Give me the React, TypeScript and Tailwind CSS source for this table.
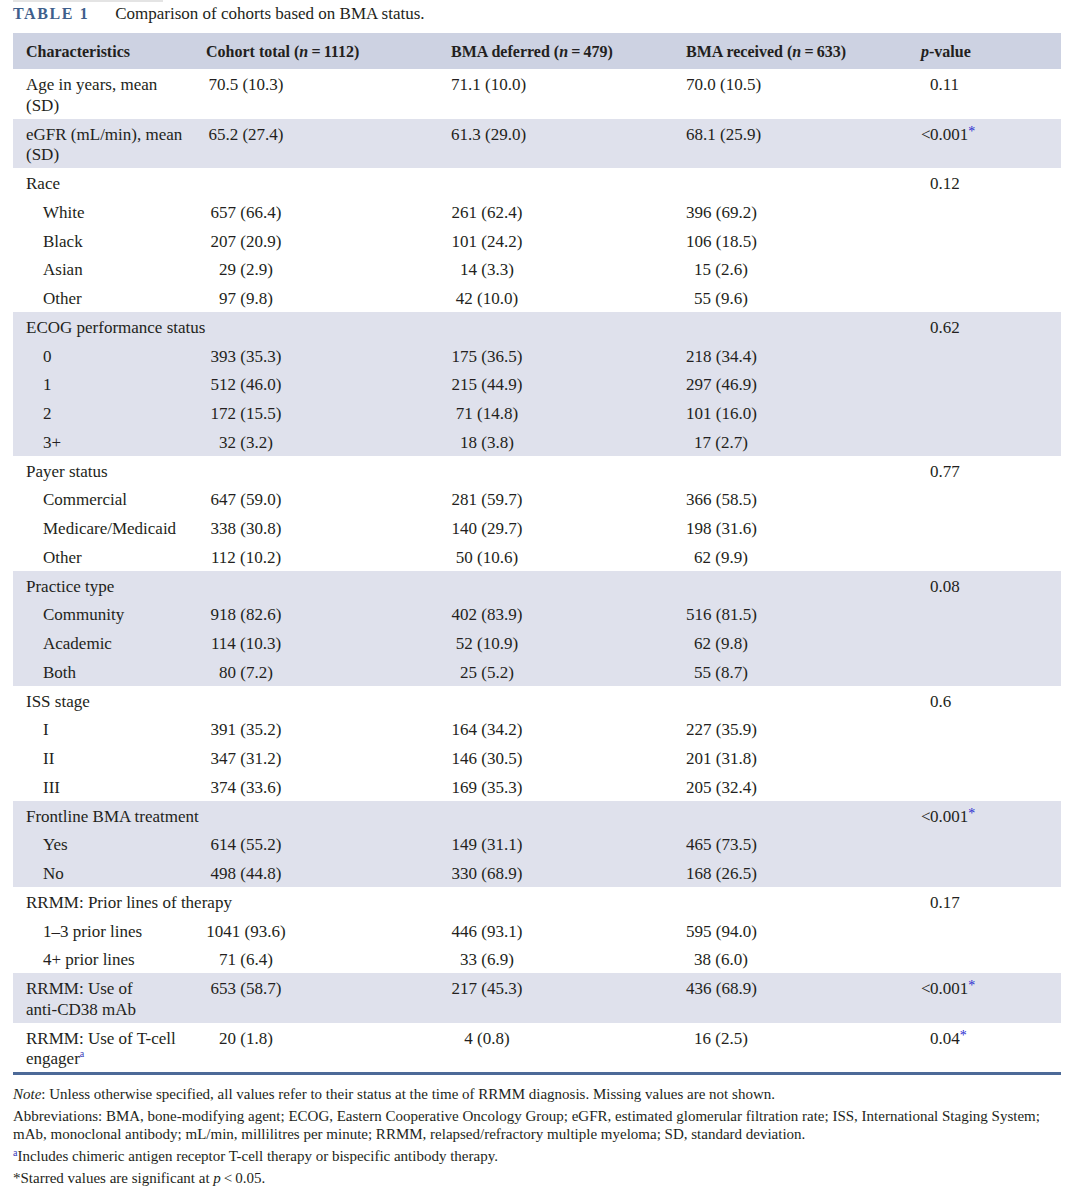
import React from "react";

type Row = {
  label: React.ReactNode;
  c?: string;
  d?: string;
  r?: string;
  p?: string;
  sub?: boolean;
};

type Group = { shaded: boolean; rows: Row[] };

const groups: Group[] = [
  {
    shaded: false,
    rows: [
      {
        label: (
          <>
            Age in years, mean
            <br />
            (SD)
          </>
        ),
        c: "70.5 (10.3)",
        d: "71.1 (10.0)",
        r: "70.0 (10.5)",
        p: "0.11",
      },
    ],
  },
  {
    shaded: true,
    rows: [
      {
        label: (
          <>
            eGFR (mL/min), mean
            <br />
            (SD)
          </>
        ),
        c: "65.2 (27.4)",
        d: "61.3 (29.0)",
        r: "68.1 (25.9)",
        p: "<0.001*",
      },
    ],
  },
  {
    shaded: false,
    rows: [
      { label: "Race", p: "0.12" },
      { label: "White", sub: true, c: "657 (66.4)", d: "261 (62.4)", r: "396 (69.2)" },
      { label: "Black", sub: true, c: "207 (20.9)", d: "101 (24.2)", r: "106 (18.5)" },
      { label: "Asian", sub: true, c: "29 (2.9)", d: "14 (3.3)", r: "15 (2.6)" },
      { label: "Other", sub: true, c: "97 (9.8)", d: "42 (10.0)", r: "55 (9.6)" },
    ],
  },
  {
    shaded: true,
    rows: [
      { label: "ECOG performance status", p: "0.62" },
      { label: "0", sub: true, c: "393 (35.3)", d: "175 (36.5)", r: "218 (34.4)" },
      { label: "1", sub: true, c: "512 (46.0)", d: "215 (44.9)", r: "297 (46.9)" },
      { label: "2", sub: true, c: "172 (15.5)", d: "71 (14.8)", r: "101 (16.0)" },
      { label: "3+", sub: true, c: "32 (3.2)", d: "18 (3.8)", r: "17 (2.7)" },
    ],
  },
  {
    shaded: false,
    rows: [
      { label: "Payer status", p: "0.77" },
      { label: "Commercial", sub: true, c: "647 (59.0)", d: "281 (59.7)", r: "366 (58.5)" },
      { label: "Medicare/Medicaid", sub: true, c: "338 (30.8)", d: "140 (29.7)", r: "198 (31.6)" },
      { label: "Other", sub: true, c: "112 (10.2)", d: "50 (10.6)", r: "62 (9.9)" },
    ],
  },
  {
    shaded: true,
    rows: [
      { label: "Practice type", p: "0.08" },
      { label: "Community", sub: true, c: "918 (82.6)", d: "402 (83.9)", r: "516 (81.5)" },
      { label: "Academic", sub: true, c: "114 (10.3)", d: "52 (10.9)", r: "62 (9.8)" },
      { label: "Both", sub: true, c: "80 (7.2)", d: "25 (5.2)", r: "55 (8.7)" },
    ],
  },
  {
    shaded: false,
    rows: [
      { label: "ISS stage", p: "0.6" },
      { label: "I", sub: true, c: "391 (35.2)", d: "164 (34.2)", r: "227 (35.9)" },
      { label: "II", sub: true, c: "347 (31.2)", d: "146 (30.5)", r: "201 (31.8)" },
      { label: "III", sub: true, c: "374 (33.6)", d: "169 (35.3)", r: "205 (32.4)" },
    ],
  },
  {
    shaded: true,
    rows: [
      { label: "Frontline BMA treatment", p: "<0.001*" },
      { label: "Yes", sub: true, c: "614 (55.2)", d: "149 (31.1)", r: "465 (73.5)" },
      { label: "No", sub: true, c: "498 (44.8)", d: "330 (68.9)", r: "168 (26.5)" },
    ],
  },
  {
    shaded: false,
    rows: [
      { label: "RRMM: Prior lines of therapy", p: "0.17" },
      { label: "1–3 prior lines", sub: true, c: "1041 (93.6)", d: "446 (93.1)", r: "595 (94.0)" },
      { label: "4+ prior lines", sub: true, c: "71 (6.4)", d: "33 (6.9)", r: "38 (6.0)" },
    ],
  },
  {
    shaded: true,
    rows: [
      {
        label: (
          <>
            RRMM: Use of
            <br />
            anti-CD38 mAb
          </>
        ),
        c: "653 (58.7)",
        d: "217 (45.3)",
        r: "436 (68.9)",
        p: "<0.001*",
      },
    ],
  },
  {
    shaded: false,
    rows: [
      {
        label: (
          <>
            RRMM: Use of T-cell
            <br />
            engager
            <span className="relative top-[-7px] text-[10px] leading-none text-[#3a3ab8]">a</span>
          </>
        ),
        c: "20 (1.8)",
        d: "4 (0.8)",
        r: "16 (2.5)",
        p: "0.04*",
      },
    ],
  },
];

function PValue({ v }: { v?: string }) {
  if (!v) return null;
  const lt = v.startsWith("<");
  const star = v.endsWith("*");
  const num = v.replace("<", "").replace("*", "");
  return (
    <div className="flex">
      <span className="inline-block w-[9px] text-right">{lt ? "<" : ""}</span>
      <span>{num}</span>
      {star && (
        <span className="relative top-[-3px] text-[14px] leading-[20px] text-[#2a2ad0]">*</span>
      )}
    </div>
  );
}

function DataRow({ row }: { row: Row }) {
  return (
    <div className="grid grid-cols-[193px_245px_235px_235px_140px] pt-[6px] pb-[2px]">
      <div className={`${row.sub ? "pl-[30px]" : "pl-[13px]"} whitespace-nowrap`}>{row.label}</div>
      <div>
        {row.c && <div className="w-[80px] text-center whitespace-nowrap">{row.c}</div>}
      </div>
      <div>
        {row.d && <div className="w-[72px] text-center whitespace-nowrap">{row.d}</div>}
      </div>
      <div>
        {row.r && <div className="w-[70px] text-center whitespace-nowrap">{row.r}</div>}
      </div>
      <div>
        <PValue v={row.p} />
      </div>
    </div>
  );
}

export default function App() {
  return (
    <div
      className="bg-white w-[1072px] min-h-[1200px] text-[#231f20]"
      style={{ fontFamily: '"Liberation Serif", "Times New Roman", serif' }}
    >
      <div className="pl-[13px] pr-[11px]">
        <div className="h-[2px] w-[150px] bg-[#e4e4e4]" />
        <div className="flex items-baseline h-[31px] pt-[2px]">
          <span className="font-bold text-[16px] tracking-[1.6px] text-[#3f5f8c] leading-[20px]">
            TABLE 1
          </span>
          <span className="ml-[26px] text-[17px] leading-[20px]">
            Comparison of cohorts based on BMA status.
          </span>
        </div>

        <div className="w-[1048px] text-[17px] leading-[20.75px]">
          <div className="grid grid-cols-[193px_245px_235px_235px_140px] bg-[#cdd2e2] pt-[9px] pb-[6.25px] font-bold text-[16px]">
            <div className="pl-[13px]">Characteristics</div>
            <div>
              Cohort total (<i>n</i>
              {"\u2009=\u2009"}1112)
            </div>
            <div>
              BMA deferred (<i>n</i>
              {"\u2009=\u2009"}479)
            </div>
            <div>
              BMA received (<i>n</i>
              {"\u2009=\u2009"}633)
            </div>
            <div>
              <i>p</i>-value
            </div>
          </div>

          {groups.map((g, gi) => (
            <div key={gi} className={g.shaded ? "bg-[#dfe1ec]" : "bg-white"}>
              {g.rows.map((row, ri) => (
                <DataRow key={ri} row={row} />
              ))}
            </div>
          ))}

          <div className="h-[3px] bg-[#4d6a98]" />
        </div>

        <div className="mt-[10px] text-[15px] leading-[18px]">
          <p>
            <i>Note</i>: Unless otherwise specified, all values refer to their status at the time of RRMM diagnosis. Missing values are not shown.
          </p>
          <p className="mt-[4px] whitespace-nowrap">
            Abbreviations: BMA, bone-modifying agent; ECOG, Eastern Cooperative Oncology Group; eGFR, estimated glomerular filtration rate; ISS, International Staging System;
            <br />
            mAb, monoclonal antibody; mL/min, millilitres per minute; RRMM, relapsed/refractory multiple myeloma; SD, standard deviation.
          </p>
          <p className="mt-[4px]">
            <span className="relative top-[-5px] text-[10px] leading-none text-[#3a3ab8]">a</span>Includes chimeric antigen receptor T-cell therapy or bispecific antibody therapy.
          </p>
          <p className="mt-[4px]">
            *Starred values are significant at <i>p</i>
            {"\u2009<\u2009"}0.05.
          </p>
        </div>
      </div>
    </div>
  );
}
